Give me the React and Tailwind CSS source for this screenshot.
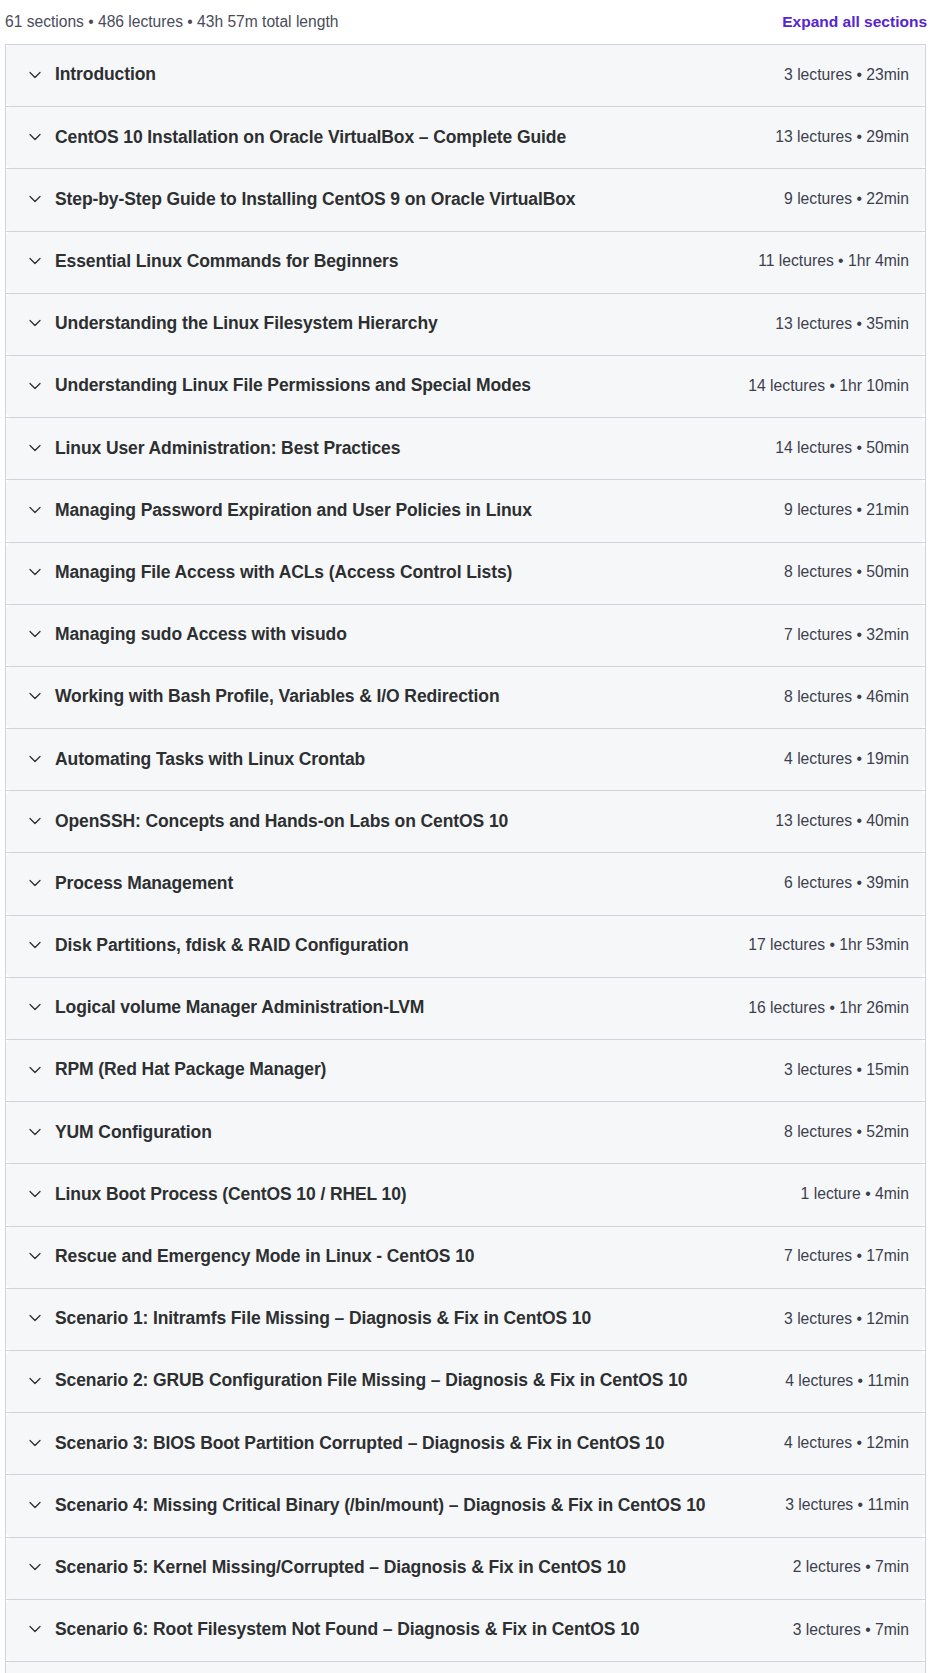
import { ChevronDown } from 'lucide-react';

const sections = [
  ['Introduction', '3 lectures • 23min'],
  ['CentOS 10 Installation on Oracle VirtualBox – Complete Guide', '13 lectures • 29min'],
  ['Step-by-Step Guide to Installing CentOS 9 on Oracle VirtualBox', '9 lectures • 22min'],
  ['Essential Linux Commands for Beginners', '11 lectures • 1hr 4min'],
  ['Understanding the Linux Filesystem Hierarchy', '13 lectures • 35min'],
  ['Understanding Linux File Permissions and Special Modes', '14 lectures • 1hr 10min'],
  ['Linux User Administration: Best Practices', '14 lectures • 50min'],
  ['Managing Password Expiration and User Policies in Linux', '9 lectures • 21min'],
  ['Managing File Access with ACLs (Access Control Lists)', '8 lectures • 50min'],
  ['Managing sudo Access with visudo', '7 lectures • 32min'],
  ['Working with Bash Profile, Variables & I/O Redirection', '8 lectures • 46min'],
  ['Automating Tasks with Linux Crontab', '4 lectures • 19min'],
  ['OpenSSH: Concepts and Hands-on Labs on CentOS 10', '13 lectures • 40min'],
  ['Process Management', '6 lectures • 39min'],
  ['Disk Partitions, fdisk & RAID Configuration', '17 lectures • 1hr 53min'],
  ['Logical volume Manager Administration-LVM', '16 lectures • 1hr 26min'],
  ['RPM (Red Hat Package Manager)', '3 lectures • 15min'],
  ['YUM Configuration', '8 lectures • 52min'],
  ['Linux Boot Process (CentOS 10 / RHEL 10)', '1 lecture • 4min'],
  ['Rescue and Emergency Mode in Linux - CentOS 10', '7 lectures • 17min'],
  ['Scenario 1: Initramfs File Missing – Diagnosis & Fix in CentOS 10', '3 lectures • 12min'],
  ['Scenario 2: GRUB Configuration File Missing – Diagnosis & Fix in CentOS 10', '4 lectures • 11min'],
  ['Scenario 3: BIOS Boot Partition Corrupted – Diagnosis & Fix in CentOS 10', '4 lectures • 12min'],
  ['Scenario 4: Missing Critical Binary (/bin/mount) – Diagnosis & Fix in CentOS 10', '3 lectures • 11min'],
  ['Scenario 5: Kernel Missing/Corrupted – Diagnosis & Fix in CentOS 10', '2 lectures • 7min'],
  ['Scenario 6: Root Filesystem Not Found – Diagnosis & Fix in CentOS 10', '3 lectures • 7min'],
  ['Scenario 7: Filesystem Corruption – Diagnosis & Fix in CentOS 10', '3 lectures • 9min'],
];

function SectionRow({ title, meta }) {
  return (
    <div className="border-b border-[#d1d2e0] last:border-0">
      <div className="h-[61.2px] bg-[#f6f7f9] rounded-[5px] flex items-center pl-[19px] pr-[16px] pb-[2px]">
        <ChevronDown size={20} strokeWidth={1.5} className="text-[#2d2f31] shrink-0" />
        <span className="ml-[10px] flex-1 text-[17.5px] font-bold text-[#2d2f31] tracking-[-0.1px]">{title}</span>
        <span className="text-[15.7px] text-[#3d3f4f] whitespace-nowrap">{meta}</span>
      </div>
    </div>
  );
}

export default function App() {
  return (
    <div className="bg-white min-h-screen font-['Liberation_Sans',Arial,sans-serif] pl-[5px] pr-[5px]">
      <div className="flex items-center justify-between h-[44px] pb-[1px]">
        <span className="text-[15.6px] text-[#4a4c5c]">61 sections • 486 lectures • 43h 57m total length</span>
        <button className="text-[15.5px] font-bold text-[#5624d0] -mr-[1px]">Expand all sections</button>
      </div>
      <div className="border border-[#d1d2e0] overflow-hidden">
        {sections.map(([title, meta]) => (
          <SectionRow key={title} title={title} meta={meta} />
        ))}
      </div>
    </div>
  );
}
